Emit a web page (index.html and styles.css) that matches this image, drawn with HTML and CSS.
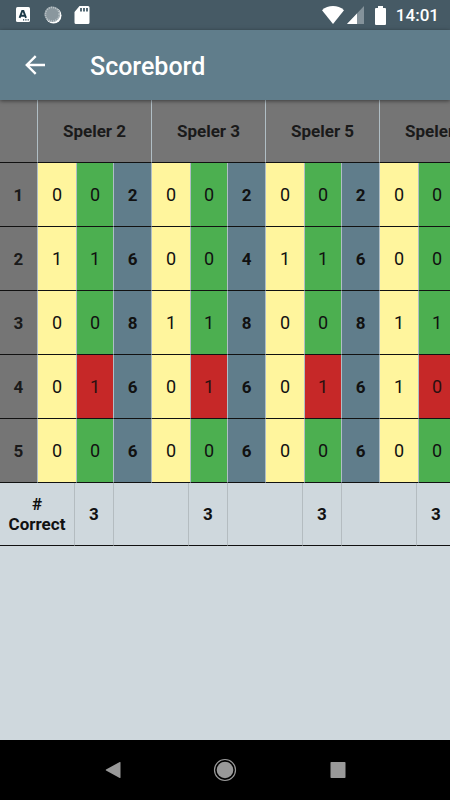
FILE: index.html
```html
<!DOCTYPE html>
<html lang="nl">

<head>
    <meta charset="utf-8">
    <meta name="viewport" content="width=device-width, initial-scale=1">
    <title>Scorebord</title>
    <link rel="stylesheet" href="styles.css">
</head>

<body>

    <div class="status-bar">
        <svg class="icon-lang" width="14" height="16" viewBox="0 0 14 16">
            <rect width="14" height="15" rx="1.5" fill="#fff" />
            <path d="M3.600 10.800 6.200 4h1.200L10 10.800M4.600 8.700h4.400" fill="none" stroke="#1c3a48" stroke-width="1.900" />
            <path d="M7 12.800h1.200M9.300 12.800h1.200M11.600 12.800h1.200" stroke="#1c3a48" stroke-width="1.300" />
        </svg>
        <svg class="icon-sync" width="18" height="18" viewBox="0 0 18 18">
            <circle cx="9.5" cy="9.5" r="8" fill="#fff" />
            <circle cx="8.3" cy="8.3" r="7.8" fill="#8a979e" />
            <circle cx="8.3" cy="8.3" r="6.9" fill="none" stroke="#b9c2c6" stroke-width="1.6" stroke-dasharray="1.2 1" />
        </svg>
        <svg class="icon-sd" width="16" height="18" viewBox="0 0 16 18">
            <path d="M5.5 0H14a1.5 1.5 0 0 1 1.5 1.5v15A1.5 1.5 0 0 1 14 18H2a1.5 1.5 0 0 1-1.5-1.5V6z" fill="#fff" />
            <path d="M7 2v3.500M10 2v3.500M13 2v3.500" stroke="#1c3a48" stroke-width="1.500" />
        </svg>
        <svg class="icon-wifi" width="22" height="18" viewBox="0 0 22 18">
            <path d="M11 18 0 4.200C6-1.300 16-1.300 22 4.200z" fill="#fff" />
        </svg>
        <svg class="icon-signal" width="18" height="18" viewBox="0 0 18 18">
            <path d="M17 0v18H0z" fill="#84929a" />
            <path d="M10 7.400V18H0z" fill="#fff" />
        </svg>
        <svg class="icon-battery" width="11" height="19" viewBox="0 0 11 19">
            <path d="M3 0h5v2h2a1 1 0 0 1 1 1v15a1 1 0 0 1-1 1H1a1 1 0 0 1-1-1V3a1 1 0 0 1 1-1h2z" fill="#fff" />
        </svg>
        <span class="clock">14:01</span>
    </div>

    <header class="toolbar">
        <button type="button" class="back" aria-label="Terug">
            <svg width="20" height="20" viewBox="0 0 20 20">
                <path d="M20 10H2M10.700 1.200 1.800 10l8.900 8.800" fill="none" stroke="#fff" stroke-width="2.400" />
            </svg>
        </button>
        <h1>Scorebord</h1>
    </header>

    <main class="board">
        <table class="scores">
            <colgroup>
                <col class="col-round">
            </colgroup>
            <thead>
                <tr id="players">
                    <th></th>
                </tr>
            </thead>
            <tbody id="rounds"></tbody>
        </table>
        <table class="totals">
            <tbody>
                <tr id="totals"></tr>
            </tbody>
        </table>
    </main>

    <nav class="nav-bar">
        <button type="button" aria-label="Vorige">
            <svg width="24" height="24" viewBox="0 0 24 24">
                <path d="M19.500 4.500v15a.5.5 0 0 1-.8.4L5 12.400a.5.5 0 0 1 0-.8L18.700 4.100a.5.5 0 0 1 .8.4z" fill="#999" />
            </svg>
        </button>
        <button type="button" aria-label="Start">
            <svg width="24" height="24" viewBox="0 0 24 24">
                <circle cx="12" cy="12" r="10.500" fill="none" stroke="#999" stroke-width="1.200" />
                <circle cx="12" cy="12" r="8.300" fill="#999" />
            </svg>
        </button>
        <button type="button" aria-label="Overzicht">
            <svg width="24" height="24" viewBox="0 0 24 24">
                <rect x="4.500" y="4" width="15" height="16" rx=".8" fill="#999" />
            </svg>
        </button>
    </nav>

    <script src="script.js"></script>
</body>

</html>
```

FILE: styles.css
```css
* {
    box-sizing: border-box;
}

body {
    display: flex;
    flex-direction: column;
    min-height: 100vh;
    margin: 0;
    background-color: #cfd8dd;
    color: #111;
    font-family: Roboto, sans-serif;
}

button {
    display: flex;
    justify-content: center;
    padding: 0;
    border: none;
    background: none;
    cursor: pointer;
}

.status-bar {
    display: flex;
    align-items: center;
    height: 30px;
    padding: 0 11px 0 16px;
    background-color: #465a65;
    color: #fff;
}

.icon-sync {
    margin-left: 14px;
}

.icon-sd {
    margin-left: 12px;
}

.icon-wifi {
    margin-left: auto;
}

.icon-signal {
    margin-left: 3px;
}

.icon-battery,
.clock {
    margin-left: 10px;
}

.clock {
    font-size: 17px;
    font-weight: 500;
}

.toolbar {
    display: flex;
    align-items: center;
    height: 70px;
    padding-left: 25px;
    background-color: #607d8b;
    box-shadow: 0 1px 4px rgba(0, 0, 0, 0.5);
    color: #fff;
    z-index: 1;
}

.toolbar h1 {
    margin: 2px 0 0 45px;
    font-size: 25px;
    font-weight: 500;
}

.board {
    flex: 1;
    overflow: hidden;
}

table {
    table-layout: fixed;
    border-collapse: separate;
    border-spacing: 0;
    font-size: 17px;
    line-height: 20px;
}

th,
td {
    height: 64px;
    padding: 0;
    border-right: 1px solid #b0bec5;
    border-bottom: 1px solid #111;
    text-align: center;
}

th {
    font-weight: 700;
}

.scores {
    width: 494px;
}

.scores th {
    background-color: #757575;
    color: #1a1a1a;
}

.scores thead th {
    height: 63px;
}

.col-round,
.col-points {
    width: 38px;
}

.col-guess {
    width: 39px;
}

.col-tricks {
    width: 37px;
}

.guess,
.won,
.lost {
    font-size: 18px;
}

.guess {
    background-color: #fff59d;
}

.won {
    background-color: #4caf50;
}

.lost {
    background-color: #c62828;
    color: #2a1010;
}

.points {
    background-color: #607d8b;
    font-weight: 700;
}

.totals {
    width: 456px;
}

.totals th,
.totals td {
    height: 63px;
    border-right-color: #b4bcc0;
}

.totals td {
    width: 39px;
    font-weight: 700;
}

.totals th {
    width: 75px;
    padding: 0 5px;
}

.nav-bar {
    display: flex;
    justify-content: center;
    align-items: center;
    height: 60px;
    background-color: #000;
}

.nav-bar button {
    width: 25%;
}
```

FILE: script.js
```js
const players = [
    { name: "Speler 2", correct: 3, rounds: [[0, 0, 2], [1, 1, 6], [0, 0, 8], [0, 1, 6], [0, 0, 6]] },
    { name: "Speler 3", correct: 3, rounds: [[0, 0, 2], [0, 0, 4], [1, 1, 8], [0, 1, 6], [0, 0, 6]] },
    { name: "Speler 5", correct: 3, rounds: [[0, 0, 2], [1, 1, 6], [0, 0, 8], [0, 1, 6], [0, 0, 6]] },
    { name: "Speler 1", correct: 3, rounds: [[0, 0, 2], [0, 0, 4], [1, 1, 8], [1, 0, 6], [0, 0, 6]] }
];

const columns = document.querySelector(".scores colgroup");
const header = document.getElementById("players");
const body = document.getElementById("rounds");
const totals = document.getElementById("totals");

players.forEach((player, i) => {
    columns.innerHTML += '<col class="col-guess"><col class="col-tricks"><col class="col-points">';
    header.innerHTML += `<th colspan="3">${player.name}</th>`;
    totals.innerHTML += `<th>${i == 0 ? "# Correct" : ""}</th><td>${player.correct}</td>`;
});

for (let r = 0; r < 5; r++) {
    let row = `<th>${r + 1}</th>`;

    players.forEach(player => {
        const [guess, tricks, points] = player.rounds[r];
        const result = guess === tricks ? "won" : "lost";
        row += `<td class="guess">${guess}</td><td class="${result}">${tricks}</td><td class="points">${points}</td>`;
    });

    body.innerHTML += `<tr>${row}</tr>`;
}
```
